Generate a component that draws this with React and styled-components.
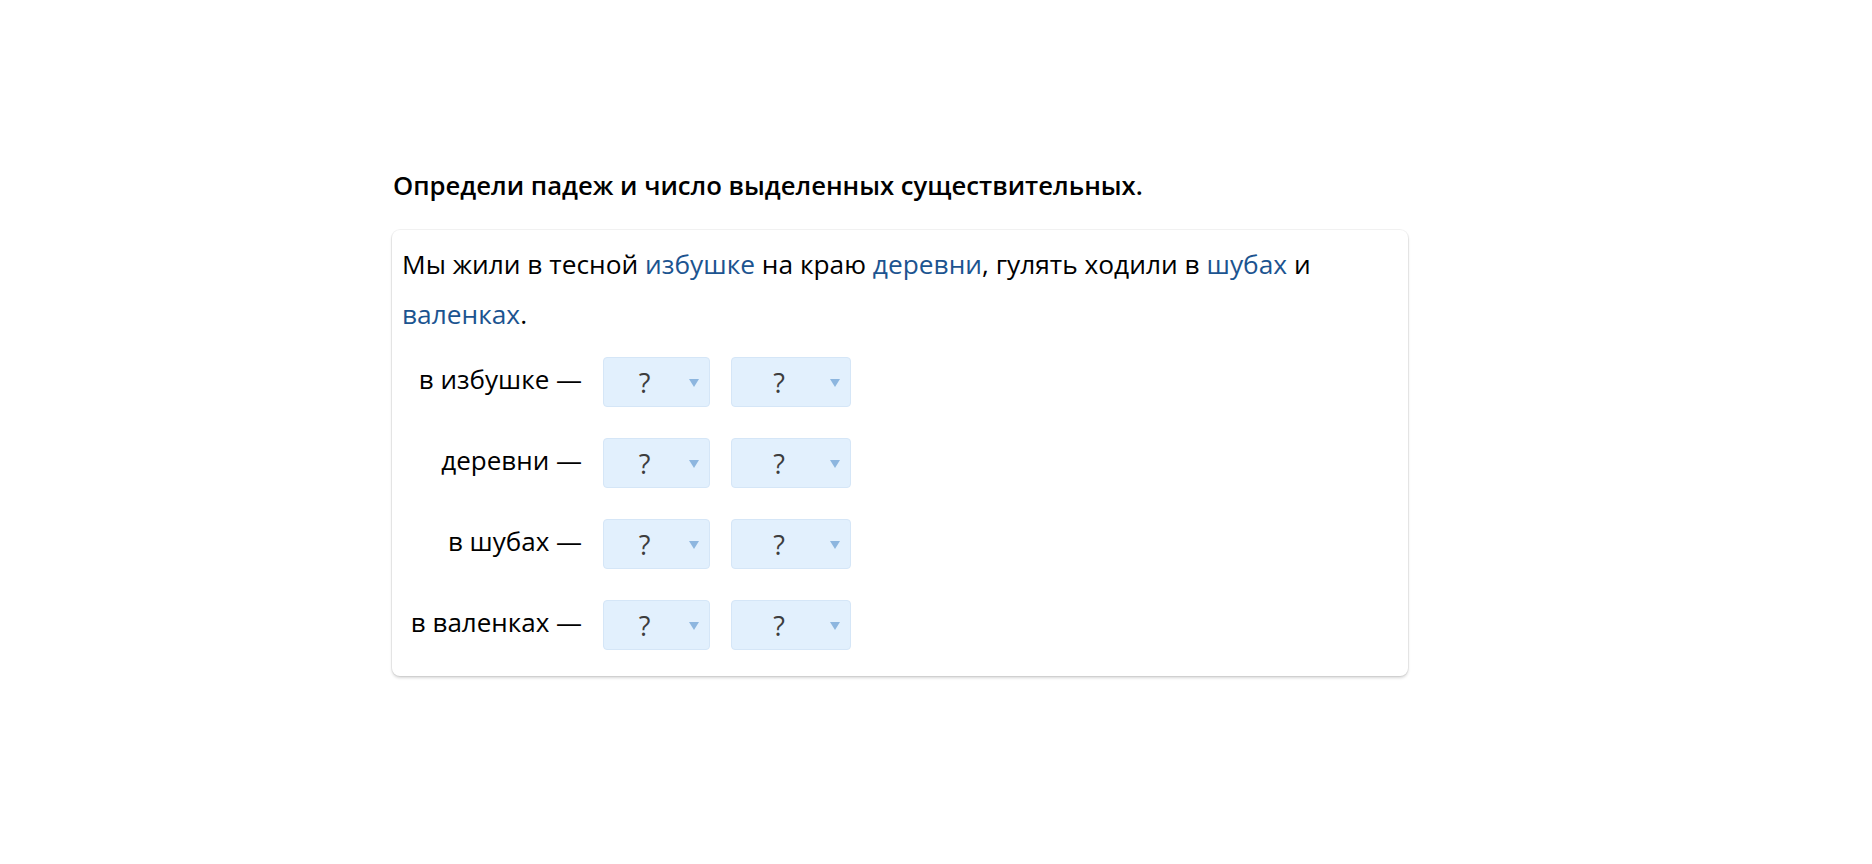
import styled, { createGlobalStyle } from "styled-components";

const GlobalStyle = createGlobalStyle`
  html, body {
    margin: 0;
    padding: 0;
    background: #ffffff;
  }
  body {
    font-family: "Open Sans", "Noto Sans", sans-serif;
    color: #000;
  }
`;

const Page = styled.div`
  width: 1872px;
  min-height: 864px;
  box-sizing: border-box;
  padding: 170px 0 0 392px;
`;

const Title = styled.h2`
  margin: 0 0 28px 1px;
  font-size: 25.7px;
  line-height: 32px;
  font-weight: 600;
  color: #000;
`;

const Card = styled.div`
  width: 1016px;
  box-sizing: border-box;
  padding: 9px 10px 26px 10px;
  background: #fff;
  border-radius: 8px;
  box-shadow: 0 0 0 1px rgba(0, 0, 0, 0.05), 0 2px 3px rgba(0, 0, 0, 0.16);
`;

const Text = styled.p`
  margin: 0 0 18px 0;
  font-size: 26.3px;
  line-height: 50px;
`;

const Word = styled.span`
  color: #1c5490;
`;

const Rows = styled.div`
  display: grid;
  grid-template-columns: 180px auto auto 1fr;
  column-gap: 21px;
  row-gap: 31px;
  align-items: center;
`;

const Label = styled.div`
  text-align: right;
  font-size: 26px;
  line-height: 44px;
  padding-bottom: 6px;
  white-space: nowrap;
`;

const Select = styled.div`
  position: relative;
  width: ${(p) => p.$width}px;
  height: 50px;
  box-sizing: border-box;
  padding-right: 24px;
  display: flex;
  align-items: center;
  justify-content: center;
  background: #e2f0fd;
  border: 1px solid #d5e6f7;
  border-radius: 4px;
  font-size: 27px;
  color: #3d3d3d;

  &::after {
    content: "";
    position: absolute;
    right: 10px;
    top: 21px;
    border-left: 5px solid transparent;
    border-right: 5px solid transparent;
    border-top: 8px solid #8db6df;
  }
`;

const Spacer = styled.div``;

const rows = ["в избушке —", "деревни —", "в шубах —", "в валенках —"];

export default function App() {
  return (
    <>
      <GlobalStyle />
      <Page>
        <Title>Определи падеж и число выделенных существительных.</Title>
        <Card>
          <Text>
            Мы жили в тесной <Word>избушке</Word> на краю <Word>деревни</Word>,
            гулять ходили в <Word>шубах</Word> и <Word>валенках</Word>.
          </Text>
          <Rows>
            {rows.map((label) => (
              <>
                <Label key={label}>{label}</Label>
                <Select $width={107}>?</Select>
                <Select $width={120}>?</Select>
                <Spacer />
              </>
            ))}
          </Rows>
        </Card>
      </Page>
    </>
  );
}
